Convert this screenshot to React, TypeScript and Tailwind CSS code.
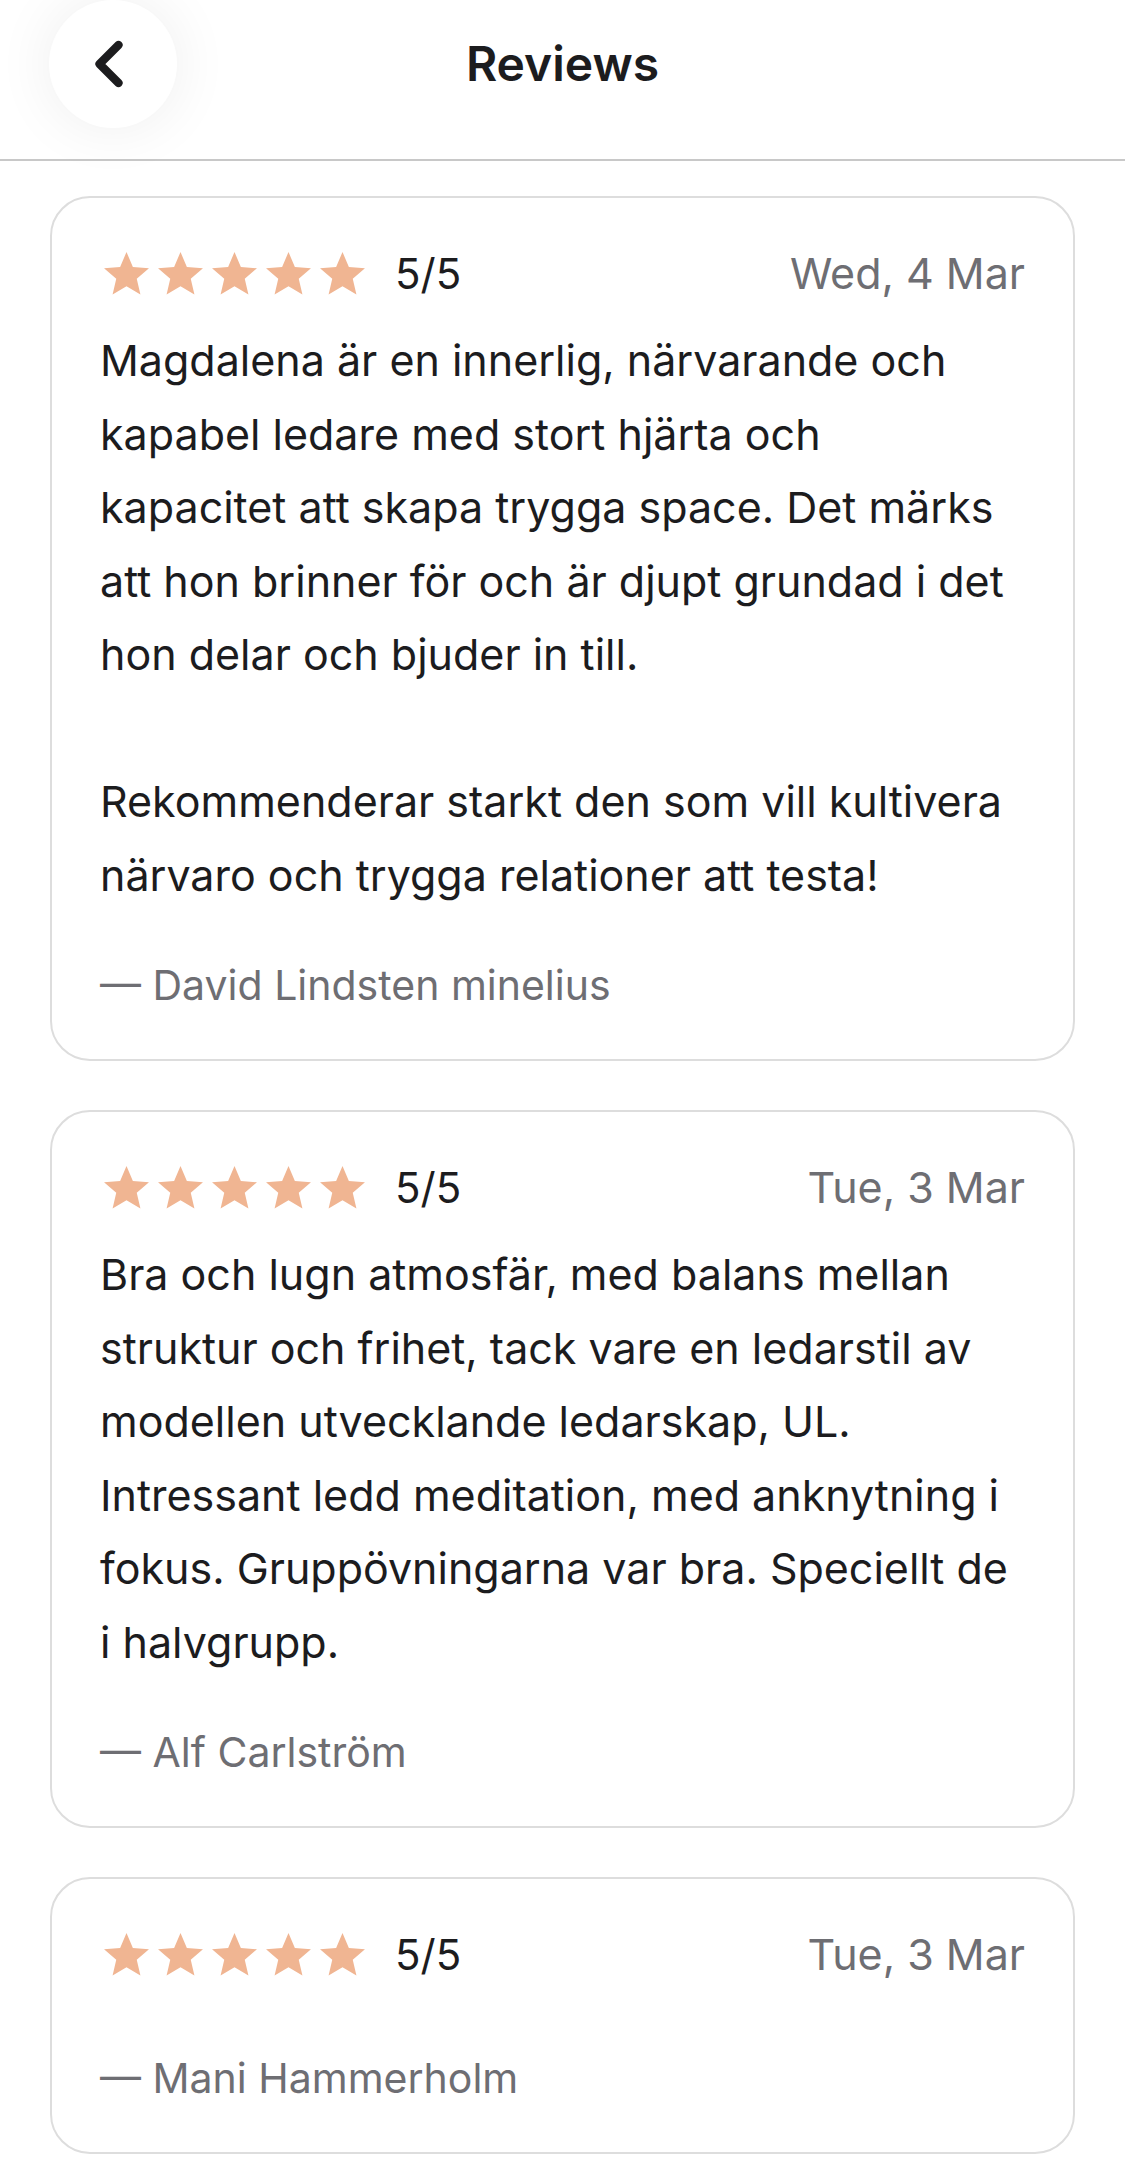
import { ChevronLeft } from "lucide-react";

interface Review {
  id: number;
  rating: number;
  date: string;
  text: string;
  author: string;
}

// line breaks follow the app's wrapping
const reviews: Review[] = [
  {
    id: 1,
    rating: 5,
    date: "Wed, 4 Mar",
    text: "Magdalena är en innerlig, närvarande och\nkapabel ledare med stort hjärta och\nkapacitet att skapa trygga space. Det märks\natt hon brinner för och är djupt grundad i det\nhon delar och bjuder in till.\n\nRekommenderar starkt den som vill kultivera\nnärvaro och trygga relationer att testa!",
    author: "David Lindsten minelius",
  },
  {
    id: 2,
    rating: 5,
    date: "Tue, 3 Mar",
    text: "Bra och lugn atmosfär, med balans mellan\nstruktur och frihet, tack vare en ledarstil av\nmodellen utvecklande ledarskap, UL.\nIntressant ledd meditation, med anknytning i\nfokus. Gruppövningarna var bra. Speciellt de\ni halvgrupp.",
    author: "Alf Carlström",
  },
  {
    id: 3,
    rating: 5,
    date: "Tue, 3 Mar",
    text: "",
    author: "Mani Hammerholm",
  },
];

function Star() {
  return (
    <svg viewBox="1.6 1.6 20.8 19.9" className="w-[45px] h-[43px]" fill="#f0b592">
      <path d="M12 1.6l2.95 6.9 7.45.62-5.66 4.9 1.7 7.3L12 17.4l-6.44 3.92 1.7-7.3L1.6 9.12l7.45-.62z" />
    </svg>
  );
}

function ReviewCard({ review }: { review: Review }) {
  return (
    <div className="flex flex-col border-2 border-[#dddddd] rounded-[40px] bg-white px-[48px] pt-[46px] pb-[45px]">
      <div className="flex items-center justify-between h-[58px]">
        <div className="flex items-center">
          <div className="flex gap-[9px] ml-[4px]">
            {Array.from({ length: review.rating }).map((_, i) => (
              <Star key={i} />
            ))}
          </div>
          <span className="ml-[30px] text-[42px] text-[#1c1c1e]">
            {review.rating}/5
          </span>
        </div>
        <span className="text-[43px] text-[#6e6e73]">{review.date}</span>
      </div>
      <p className="mt-[22px] text-[43px] leading-[73.5px] text-[#1c1c1e] whitespace-pre">
        {review.text}
      </p>
      <p className="mt-[44px] text-[41px] leading-[58px] text-[#6e6e73]">
        — {review.author}
      </p>
    </div>
  );
}

function App() {
  return (
    <div
      className="min-h-screen bg-white"
      style={{ fontFamily: "Inter, 'Noto Sans', sans-serif" }}
    >
      {/* Header */}
      <header className="border-b-2 border-[#c8c8c8] pb-[31px]">
        <div className="relative flex items-center justify-center h-[128px]">
          <button className="absolute left-[49px] top-0 w-[128px] h-[128px] rounded-full bg-white shadow-[0_0_60px_rgba(0,0,0,0.07)] flex items-center justify-center">
            <ChevronLeft size={76} strokeWidth={2.6} className="text-[#1c1c1e] -ml-[8px]" />
          </button>
          <h1 className="text-[48px] font-semibold text-[#1c1c1e]">Reviews</h1>
        </div>
      </header>

      {/* Reviews */}
      <main className="px-[50px] pt-[35px] flex flex-col gap-[49px]">
        {reviews.map((review) => (
          <ReviewCard key={review.id} review={review} />
        ))}
      </main>
    </div>
  );
}

export default App;
